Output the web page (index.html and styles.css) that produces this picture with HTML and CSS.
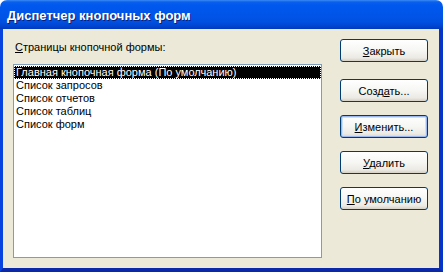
FILE: index.html
```html
<!DOCTYPE html>
<html lang="ru">
<head>
    <meta charset="UTF-8">
    <title>Диспетчер кнопочных форм</title>
    <link rel="stylesheet" href="styles.css">
</head>
<body>
    <div class="window">
        <div class="titlebar">
            <span class="title">Диспетчер кнопочных форм</span>
        </div>
        <div class="client">
            <div class="pages">
                <label class="pages-label"><u>С</u>траницы кнопочной формы:</label>
                <div class="listbox">
                    <div class="item selected">Главная кнопочная форма (По умолчанию)</div>
                    <div class="item">Список запросов</div>
                    <div class="item">Список отчетов</div>
                    <div class="item">Список таблиц</div>
                    <div class="item">Список форм</div>
                </div>
            </div>
            <div class="buttons">
                <button class="btn close-btn"><u>З</u>акрыть</button>
                <button class="btn">Созд<u>а</u>ть...</button>
                <button class="btn focused"><u>И</u>зменить...</button>
                <button class="btn"><u>У</u>далить</button>
                <button class="btn"><u>П</u>о умолчанию</button>
            </div>
        </div>
    </div>
</body>
</html>
```

FILE: styles.css
```css
body {
    margin: 0;
    background-color: #fff;
    font-family: "Liberation Sans", Arial, sans-serif;
    font-size: 11px;
}
.window {
    width: 443px;
    height: 272px;
    display: flex;
    flex-direction: column;
}
.titlebar {
    height: 29px;
    border-radius: 7px 7px 0 0;
    background: linear-gradient(to bottom, #3b8cf5 0, #0a5fec 2px, #0058ee 5px, #0055e9 14px, #0050e0 22px, #0045d0 26px, #0038bb 29px);
    display: flex;
    align-items: center;
    padding-left: 7px;
    padding-top: 1px;
    box-sizing: border-box;
}
.title {
    color: #fff;
    font-weight: bold;
    font-size: 13px;
    text-shadow: 1px 1px #0a1e7a;
}
.client {
    flex: 1;
    background-color: #ece9d8;
    border-left: 3px solid #0843e0;
    border-right: 4px solid #0734c8;
    border-bottom: 4px solid #0a28a8;
    display: flex;
    padding: 12px 11px 10px 10px;
}
.pages {
    width: 309px;
    display: flex;
    flex-direction: column;
}
.pages-label {
    margin-left: 2px;
    height: 23px;
    line-height: 13px;
}
.listbox {
    flex: 1;
    background-color: #fff;
    border: 1px solid #7f9db9;
    padding-top: 1px;
}
.item {
    height: 13px;
    line-height: 13px;
    padding-left: 2px;
    box-sizing: border-box;
}
.selected {
    background-color: #000;
    color: #fff;
    outline: 1px dotted #fff;
    outline-offset: -1px;
}
.buttons {
    margin-left: auto;
    width: 88px;
    display: flex;
    flex-direction: column;
    gap: 13px;
    padding-top: -1px;
}
.btn {
    height: 23px;
    font-family: inherit;
    font-size: 11px;
    color: #000;
    border: 1px solid #003c74;
    border-radius: 3px;
    background: linear-gradient(to bottom, #fff 0, #f6f6f3 50%, #ebeae4 85%, #d6d0c5 100%);
    padding: 0;
}
.close-btn {
    margin-top: -2px;
    margin-bottom: 4px;
}
.focused {
    box-shadow: inset 0 0 0 1px #9ab8ef, inset 0 0 0 2px #cde1fb;
}
```
